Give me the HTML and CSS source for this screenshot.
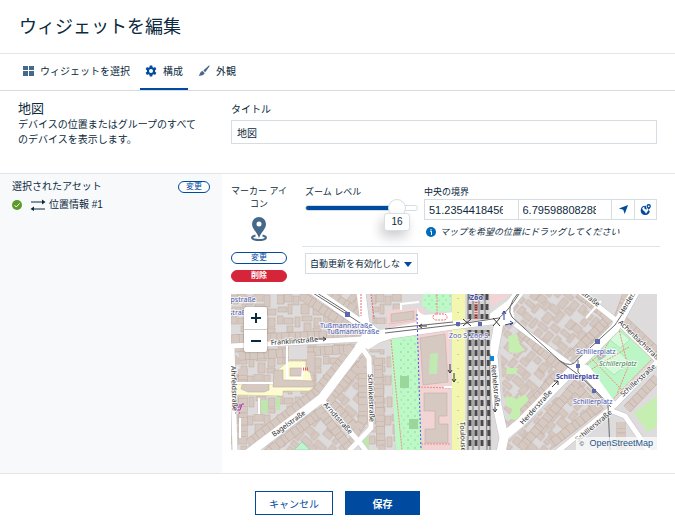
FILE: index.html
```html
<!DOCTYPE html>
<html lang="ja">
<head>
    <meta charset="UTF-8">
    <meta name="viewport" content="width=device-width, initial-scale=1.0">
    <title>ウィジェットを編集</title>
    <link rel="stylesheet" href="styles.css">
</head>
<body>
    <header class="header">
        <h1>ウィジェットを編集</h1>
    </header>

    <nav class="tabs">
        <a href="#select" class="tab">
            <svg class="tab-icon" viewBox="0 0 12 12"><path d="M1 1h5v4H1zM7 1h5v4H7zM1 6h5v5H1zM7 6h5v5H7z"/></svg>
            ウィジェットを選択
        </a>
        <a href="#config" class="tab active">
            <svg class="tab-icon" viewBox="0 0 24 24"><path fill-rule="evenodd" d="M9.500 1h5l.6 3.300 2 1.100 3.100-1.200 2.500 4.300-2.600 2.200v2.600l2.600 2.200-2.500 4.300-3.100-1.200-2 1.100-.6 3.300h-5l-.6-3.300-2-1.100-3.100 1.200-2.500-4.300 2.600-2.200v-2.600L1.300 8.500l2.500-4.300 3.100 1.200 2-1.100zM12 8a4 4 0 1 0 0 8 4 4 0 0 0 0-8z"/></svg>
            構成
        </a>
        <a href="#look" class="tab">
            <svg class="tab-icon" viewBox="0 0 12 12"><path d="M10.600.7c.6-.4 1.200.2.800.8L7.200 7.300 5.300 5.400zM4.600 6 6.600 8C6.300 10.200 3.500 11 .5 10.700 2.300 9.500 1.800 6.500 4.600 6z"/></svg>
            外観
        </a>
    </nav>

    <section class="intro">
        <div class="intro-text">
            <h2>地図</h2>
            <p>デバイスの位置またはグループのすべてのデバイスを表示します。</p>
        </div>
        <div class="intro-field">
            <label for="title">タイトル</label>
            <input type="text" id="title" class="input" value="地図">
        </div>
    </section>

    <main class="main">
        <aside class="assets">
            <div class="assets-head">
                <h3>選択されたアセット</h3>
                <button type="button" class="pill pill-small">変更</button>
            </div>
            <div class="asset">
                <svg class="check" viewBox="0 0 10 10"><circle cx="5" cy="5" r="5"/><path d="M2.500 5.200 4.300 7 7.600 3.400"/></svg>
                <svg class="arrows" viewBox="0 0 16 12"><path d="M1 3h13M2 10h13"/><path class="heads" d="M12 .5 15.500 3 12 5.500zM4 7.500.5 10 4 12z"/></svg>
                <span>位置情報 #1</span>
            </div>
        </aside>

        <div class="config">
            <div class="options">
                <div class="marker">
                    <p class="marker-label">マーカー アイコン</p>
                    <svg class="marker-icon" viewBox="0 0 16 26">
                        <path fill-rule="evenodd" d="M8 1a7 7 0 0 0-7 7c0 5 5 8 7 14 2-6 7-9 7-14a7 7 0 0 0-7-7zm0 4.500a2.500 2.500 0 1 1 0 5 2.500 2.500 0 0 1 0-5z"/>
                        <path class="ring" d="M4.500 19.500C-1.500 21 1 24 8 24s9.500-3 3.500-4.500"/>
                    </svg>
                    <button type="button" class="pill">変更</button>
                    <button type="button" class="pill pill-danger">削除</button>
                </div>

                <div class="settings">
                    <div class="settings-row">
                        <div class="zoom-level">
                            <label for="zoom">ズーム レベル</label>
                            <div class="slider">
                                <input type="range" id="zoom" min="1" max="18" value="16">
                                <output for="zoom" class="bubble">16</output>
                            </div>
                        </div>
                        <div class="bounds">
                            <label for="lat">中央の境界</label>
                            <div class="bounds-group">
                                <div class="coord"><input type="text" id="lat" value="51.23544184568"></div>
                                <div class="coord"><input type="text" aria-label="経度" value="6.79598808288"></div>
                                <button type="button" aria-label="現在地">
                                    <svg viewBox="0 0 12 12"><path d="M11 1 7.300 11 5.700 6.400 1 4.800z"/></svg>
                                </button>
                                <button type="button" aria-label="アセットの位置">
                                    <svg viewBox="0 0 12 12"><path fill-rule="evenodd" d="M6.200 2A5 5 0 1 0 10.700 8L9.300 6.500 8 8.500 6.500 10.500 5.600 8.800 3.700 7 2.300 5.200C3 3.700 4 3 5 3l-.5 1.500L6 5.800 7.500 6z"/><path fill-rule="evenodd" d="M9.500 0A2.400 2.400 0 0 0 7.100 2.400C7.100 4 9 5.200 9.500 6.500 10 5.200 11.900 4 11.900 2.400A2.400 2.400 0 0 0 9.500 0zm0 1.500a1 1 0 1 1 0 2 1 1 0 0 1 0-2z"/></svg>
                                </button>
                            </div>
                            <p class="hint">
                                <svg viewBox="0 0 10 10"><circle cx="5" cy="5" r="5"/><path d="M4 4.200h1.500V8M5 2v1.200"/></svg>
                                <em>マップを希望の位置にドラッグしてください</em>
                            </p>
                        </div>
                    </div>
                    <div class="refresh">
                        <select aria-label="自動更新">
                            <option>自動更新を有効化しな</option>
                        </select>
                    </div>
                </div>
            </div>

            <div class="map">
                <svg class="map-canvas" viewBox="0 0 426 156" preserveAspectRatio="xMidYMid slice">
                    <defs>
                        <pattern id="houses" width="46" height="40" patternUnits="userSpaceOnUse">
                            <path class="house" d="M0 1h7v9H0zM7 0h8v8H7zM16 2h6v9h-6zM23 0h9v7h-9zM33 1h6v12h-6zM1 13h9v5H1zM11 10h4v10h-4zM24 10h8v10h-8zM36 15h9v6h-9zM0 22h6v8H0zM7 24h9v6H7zM18 23h5v10h-5zM25 22h10v5H25zM37 24h7v9h-7zM10 32h6v6h-6zM27 29h7v10h-7zM36 34h8v5h-8z"/>
                        </pattern>
                        <pattern id="houses-up" width="46" height="40" patternUnits="userSpaceOnUse" patternTransform="rotate(-49)">
                            <rect width="46" height="40" fill="url(#houses)"/>
                        </pattern>
                        <pattern id="houses-down" width="46" height="40" patternUnits="userSpaceOnUse" patternTransform="rotate(40)">
                            <rect width="46" height="40" fill="url(#houses)"/>
                        </pattern>
                        <pattern id="trees" width="7" height="8" patternUnits="userSpaceOnUse">
                            <circle cx="2" cy="2" r=".7" fill="#7fbf8b"/><circle cx="5" cy="6" r=".6" fill="#7fbf8b"/>
                        </pattern>
                        <path id="terraces" d="M18 149 84 99 123 52M32 162l58-44 30 38M98 106l34-38v58l-6 10zM2 45l120-5M8 62l112-7M92-4l43 28M74 4l52 34M280 132l55-61M290 38l40 36M290 154l54-62 22 22-46 36M340 62l38-38-30-25M396 0l-8 22 38 36M396 115l30-31M390 128v30M147 65l3 88M12 75v70"/>
                        <path id="side-streets" d="M0 52 132 45M91 106 129 149 135 157M131 54 138 64 140 134 118 157M1 54 4 157M349-2 387 28 428 68M427 67 384 111 326 158M381 117 394 122 418 157M384 111 341 72 284 30"/>
                        <path id="main-streets" d="M14 162 91 104 130 52M79-6 116 20 144 40M130 50 160 40 222 31 268 25 290-4M268 28 262 61 266 111 273 144 270 158M272 143 289 129 341 76 354 64 384 34 405-4M130-2 134 30 146 40"/>
                    </defs>

                    <!-- ground and blocks -->
                    <rect width="426" height="156" fill="#dedbdc"/>
                    <path fill="url(#houses)" d="M0 0h81l55 38v8L0 51zM0 54l125-5-34 55-70 52H0zM141 0h30v30h-30zM138 55h22l5 101h-27z"/>
                    <path fill="url(#houses-up)" d="M92 104 130 60 138 70v60L118 152zM27 156 88 112 124 150v6zM268 30h20l50 45-64 72zM274 150 350 80l30 30-60 46h-44z"/>
                    <path fill="url(#houses-down)" d="M90 0h42v25zM284 0h70l30 30-46 40-56-48z"/>

                    <!-- terraces along the streets -->
                    <use href="#terraces" class="terrace-edge"/>
                    <use href="#terraces" class="terrace"/>

                    <!-- courtyards and large buildings -->
                    <path fill="#fdfbd0" stroke="#c9c5a0" stroke-width=".6" d="M4 90h41v-13l13-10h18l7 26-5 4H52v5L5 101z"/>
                    <path class="house" d="M43 76h9v10l32 1V58h-9v18l8 4v13H42zM59 74h12v8H59zM11 91c8-3 18-3 27-1v6l-5 2H17l-7-3z"/>
                    <path fill="#dedbdc" d="M58 50h18v15H58z"/>
                    <path fill="none" stroke="#fff" stroke-width="2" d="M56 47v37h15l1-12M0 89h42M9 124v20M28 104v16"/>
                    <path fill="#bfe6ae" d="M30 106h7v13h-7zM45 103h4v13h-4zM130 147l8-5v14h-9z"/>
                    <path fill="#bdf6ce" stroke="#85cf9b" stroke-width=".6" d="M65 154l6-6 8 8H64z"/>

                    <!-- park strip and school -->
                    <path fill="#bcf9c6" d="M159 44 186 40 191 156h-26zM192 0h28v17l-20 1-9-6z"/>
                    <path fill="url(#trees)" d="M168 46 186 42 191 156h-20zM192 0h28v14h-28z"/>
                    <path fill="#9bd79b" d="M169 82h9v12h-9zM178 125h9v10h-9z"/>
                    <path fill="#f3d4d5" d="M187 41l32-5v120h-28zM156 16l36-2v16l-36 3zM258 14 284-2h-25z"/>
                    <path class="house" d="M189 44l25-4 3 48-25 3zM193 99h23v23h-8v8h9v19h-23v-14h10v-18h-11zM158 19l27-3v10l-27 4z"/>
                    <path fill="#c1eab3" d="M199 60l8-1-1 21h-8z"/>
                    <path class="footway" d="M160 46l11 110M187 93l32 1M190 150h30M206 0v19"/>

                    <path fill="#c6eeb0" d="M277 42l9-2 4 16-12 3zM276 74h11l-2 6h-10zM275 102l10 2-1 12-9-4zM289 100v28l-12-4zM284 46l10 10-10 4zM284 106l10-6 4 6-14 14zM403 119l23-17v30l-9 6z"/>

                    <!-- Schillerplatz -->
                    <path fill="#bdf6c6" d="M387 31 422 64 381 106 349 76z"/>
                    <path fill="#d3fbd9" stroke="#94d8a5" stroke-width=".6" d="M388 36 399 46 389 54 379 46zM366 66 383 53 399 68 383 81z"/>
                    <path fill="#bfb9bd" d="M365 60l7-6 3 8-7 5z"/>
                    <path class="footway" d="M387 31 422 64 381 106M349 76l23-18 15-27M387 31l10 42-11 27M398 53l-42 25M360 64l31 32"/>

                    <!-- streets -->
                    <use href="#side-streets" class="street-edge"/>
                    <use href="#main-streets" class="street-edge wide"/>
                    <use href="#side-streets" class="street"/>
                    <use href="#main-streets" class="street wide"/>
                    <path fill="#fff" d="M124 52 134 36 150 36 186 28V14q2 6 8 7l40-4v15l-46 8-34 5-16 10z"/>
                    <path fill="#fff" d="M256 22 280 4l4 24-14 4zM346 68l12 4 26 36-5 6-36-36z"/>
                    <path fill="#f3d4d5" d="M156 17l29-3v12l-29 4z"/>
                    <path class="house" d="M160 20l23-3v8l-23 3z"/>
                    <path fill="none" stroke="#4d55e0" stroke-width="1" stroke-dasharray="2 2" d="M186 20l4 136"/>
                    <path fill="none" stroke="#fff" stroke-width="2" d="M170 16v-6l18-2M213 93h11M355 24l15-17"/>

                    <!-- avenue and railway -->
                    <path fill="#f3f6ae" d="M221 0h13v26l-13 1zM221 36l13-1v121h-13z"/>
                    <path fill="none" stroke="#8bb96d" stroke-width="1" stroke-dasharray="1 13" d="M227 4v152"/>
                    <path fill="#d9d6d8" d="M235 0h24v25l-24 3zM235 34l24-2 2 124h-26z"/>
                    <path class="rails" d="M237 0v25M242 0v25M248 0v25M254 0v25M237 36v120M242 36v120M248 36v120M254 36l2 120M259 60v96"/>
                    <path class="sleepers" d="M239 0v25M245 0v25M251 0v25M256 0v25M239 36v120M245 36v120M251 36v120M257 36l1 120"/>

                    <!-- tram lines -->
                    <path class="tram" d="M82-1 117 21 144 39M86-1 119 20M154 39 222 31 268 24Q278 16 288 0M154 35l68-7M288-2q-14 16-7 25l48 44q12 8 18-2l37-34L405-1M329 67l20 15 28 29 2 46M347 66v12l33 35"/>

                    <!-- stops, crossings and one-way arrows -->
                    <path class="stop-outline" d="M130 0v22M140 0l3 25"/>
                    <rect class="stop-outline" x="202" y="20" width="14" height="6" rx="3"/>
                    <path fill="none" stroke="#f05a5a" stroke-width="3" stroke-dasharray="1 1" d="M245 8v18M72 75h6"/>
                    <path fill="none" stroke="#39393b" stroke-width="1" d="M232 25l8 7M240 25l-8 7M262 24l7 8M269 24l-7 8"/>
                    <path fill="#5d67ad" d="M114 18h5v5h-5zM225 28h4v4h-4zM247 28h4v4h-4zM364 45h5v5h-5zM345 70h4v4h-4zM361 95h4v4h-4z"/>
                    <path fill="#0c86dd" d="M259 62h4v5h-4z"/>
                    <path class="arrow" d="M86 45h9m-3-2 3 2-3 2M196 32h-8m3-2-3 2 3 2M219 70v9m-2-3 2 3 2-3M223 79v9m-2-3 2 3 2-3M264 108v10m-2-3 2 3 2-3M321 93l6-6m-4 0h4v4"/>
                    <path class="arrow blue" d="M273 26V17m-2 3 2-3 2 3M274 31l8-2m-3-2 3 2-3 2"/>
                    <path fill="none" stroke="#ad39ad" stroke-width="1" d="M13 110h-2l-2 6H4l-2-5h8M3 113h7M4 119h1M8 119h1"/>

                    <g class="place">
                        <text x="-7" y="8">mpstraße</text>
                        <text x="-2" y="21">straß</text>
                        <text x="89" y="34">Tußmannstraße</text>
                        <text x="96" y="40">Tußmannstraße</text>
                        <text x="239" y="6" class="strong">Zoo</text>
                        <text x="218" y="44">Zoo S</text>
                        <text x="239" y="44">Zoo S</text>
                        <text x="345" y="60">Schillerplatz</text>
                        <text x="325" y="85" class="strong">Schillerplatz</text>
                        <text x="342" y="110">Schillerplatz</text>
                        <text x="368" y="72" class="park">Schillerplatz</text>
                    </g>
                    <g class="road">
                        <text transform="translate(40 51) rotate(-4)">Franklinstraße</text>
                        <text transform="translate(43 143) rotate(-36)">Bagelstraße</text>
                        <text transform="translate(92 111) rotate(48)">Arndtstraße</text>
                        <text transform="translate(137 80) rotate(88)">Schinkelstraße</text>
                        <text transform="translate(0 72) rotate(88)">Ahrfeldstraße</text>
                        <text transform="translate(229 128) rotate(88)">Toulouser</text>
                        <text transform="translate(260 71) rotate(84)">Rethelstraße</text>
                        <text transform="translate(292 131) rotate(-48)">Herderstraße</text>
                        <text transform="translate(392 21) rotate(-60)">Herderstr</text>
                        <text transform="translate(387 29) rotate(44)">Achenbachstraße</text>
                        <text transform="translate(350 0) rotate(38)">straße</text>
                        <text transform="translate(392 103) rotate(-42)">Schillerstraße</text>
                        <text transform="translate(347 148) rotate(-40)">Schillerstraße</text>
                    </g>
                </svg>
                <div class="map-zoom">
                    <button type="button" aria-label="拡大"><svg viewBox="0 0 10 10"><path d="M0 5h10M5 0v10"/></svg></button>
                    <button type="button" aria-label="縮小"><svg viewBox="0 0 10 10"><path d="M0 5h10"/></svg></button>
                </div>
                <div class="attribution"><small>©</small> <a href="#osm">OpenStreetMap</a></div>
            </div>
        </div>
    </main>

    <footer class="footer">
        <button type="button" class="btn">キャンセル</button>
        <button type="button" class="btn btn-primary">保存</button>
    </footer>
</body>
</html>
```

FILE: styles.css
```css
* {
    box-sizing: border-box;
}

body {
    margin: 0;
    background: #fff;
    color: #0b2a3d;
    font-family: "Liberation Sans", "Noto Sans CJK JP", sans-serif;
    font-size: 10px;
    line-height: 15px;
}

h1, h2, h3, p {
    margin: 0;
    font-weight: normal;
}

input, select, button {
    margin: 0;
    font-family: inherit;
    font-size: 10px;
    color: inherit;
}

button {
    padding: 0;
    cursor: pointer;
}

.header {
    padding: 14px 19px 13px;
    border-bottom: 1px solid #e3e6e9;
}

.header h1 {
    font-size: 18px;
    line-height: 26px;
}

/* Tabs */
.tabs {
    display: flex;
    gap: 5px;
    padding-left: 17px;
    border-bottom: 1px solid #d5dbe0;
}

.tab {
    display: flex;
    align-items: center;
    gap: 6px;
    height: 36px;
    padding: 0 5px;
    border-bottom: 2px solid transparent;
    color: inherit;
    text-decoration: none;
}

.tab.active {
    border-bottom-color: #004b9f;
}

.tab-icon {
    width: 12px;
    height: 12px;
    fill: #45698a;
}

.active .tab-icon {
    fill: #004b9f;
}

/* Widget title */
.intro {
    display: flex;
    gap: 28px;
    padding: 9px 18px 26px;
    border-bottom: 1px solid #e1e5e8;
}

.intro-text {
    flex: 0 0 185px;
}

.intro-text h2 {
    font-size: 13px;
    line-height: 17px;
}

.intro-field {
    flex: 1;
}

.intro-field label {
    display: block;
    height: 20px;
    line-height: 19px;
}

.input {
    display: block;
    width: 100%;
    height: 24px;
    padding: 0 5px;
    border: 1px solid #d5dde3;
}

/* Body */
.main {
    display: flex;
    border-bottom: 1px solid #e3e6e9;
}

.assets {
    flex: 0 0 222px;
    padding: 5px 12px;
    background: #f7f9fb;
}

.assets-head {
    display: flex;
    justify-content: space-between;
    align-items: center;
}

.assets-head h3 {
    font-size: 10px;
}

.asset {
    display: flex;
    align-items: center;
    gap: 3px;
    margin-top: 3px;
}

.check {
    width: 10px;
    height: 10px;
    margin-right: 5px;
    fill: #5b9b28;
}

.check path {
    fill: none;
    stroke: #fff;
}

.arrows {
    width: 16px;
    height: 12px;
    stroke: #0b2a3d;
}

.heads {
    fill: #0b2a3d;
    stroke: none;
}

.pill {
    display: block;
    width: 100%;
    height: 12px;
    border: 1px solid #004b9f;
    border-radius: 6px;
    background: #fff;
    color: #004b9f;
    font-size: 8px;
    line-height: 10px;
}

.pill-small {
    width: 32px;
}

.pill-danger {
    margin-top: 6px;
    border-color: #d4253a;
    background: #d4253a;
    color: #fff;
    font-weight: bold;
}

.config {
    flex: 1;
    min-width: 0;
    padding: 11px 18px 23px 9px;
}

.options {
    display: flex;
    gap: 15px;
    margin-right: -3px;
}

.marker {
    flex: 0 0 56px;
    text-align: center;
}

.marker-label {
    margin: 0 -2px;
    font-size: 9px;
    line-height: 13px;
}

.marker-icon {
    display: block;
    width: 16px;
    height: 26px;
    margin: 5px auto 10px;
    fill: #45698a;
}

.marker-icon .ring {
    fill: none;
    stroke: #45698a;
    stroke-width: 2;
}

.settings {
    flex: 1;
    min-width: 0;
    font-size: 9px;
    line-height: 14px;
}

.settings-row {
    display: flex;
    gap: 6px;
    padding: 0 3px 7px;
    border-bottom: 1px solid #e0e4e7;
}

.settings label {
    display: block;
}

.zoom-level {
    flex: 0 0 113px;
}

.slider {
    position: relative;
}

.slider input {
    display: block;
    width: 100%;
    height: 18px;
    appearance: none;
    background: none;
}

.slider input::-webkit-slider-runnable-track {
    height: 6px;
    border: 1px solid #d5dde3;
    border-radius: 3px;
    background: linear-gradient(to right, #004b9f 84%, #fff 84%) border-box;
}

.slider input::-webkit-slider-thumb {
    appearance: none;
    width: 18px;
    height: 18px;
    margin-top: -7px;
    border: 1px solid #d5dde3;
    border-radius: 50%;
    background: #fff;
}

.bubble {
    position: absolute;
    top: 14px;
    right: 8px;
    width: 26px;
    height: 18px;
    border: 1px solid #d9dfe4;
    border-radius: 3px;
    background: #fff;
    box-shadow: -3px 6px 12px rgba(0, 0, 0, 0.2);
    font-size: 10px;
    line-height: 16px;
    text-align: center;
}

.bounds {
    flex: 1;
    min-width: 0;
}

.bounds-group {
    display: flex;
    height: 21px;
    border: 1px solid #d5dde3;
}

.coord {
    flex: 1;
    min-width: 0;
    padding: 0 15px 0 4px;
    border-right: 1px solid #d5dde3;
}

.coord input {
    display: block;
    width: 100%;
    height: 19px;
    padding: 0;
    border: none;
    background: none;
    font-size: 11px;
}

.bounds-group button {
    display: flex;
    align-items: center;
    justify-content: center;
    width: 22px;
    border: none;
    background: #fff;
}

.bounds-group button + button {
    border-left: 1px solid #d5dde3;
}

.bounds-group svg {
    width: 11px;
    height: 11px;
    fill: #004b9f;
}

.hint {
    display: flex;
    align-items: center;
    gap: 4px;
    padding: 5px 2px 0;
}

.hint svg {
    width: 10px;
    height: 10px;
    fill: #006bb8;
}

.hint svg path {
    fill: none;
    stroke: #fff;
}

.refresh {
    position: relative;
    width: 113px;
    margin: 6px 3px 0;
}

.refresh::after {
    content: "";
    position: absolute;
    top: 9px;
    right: 6px;
    border: 4px solid transparent;
    border-top: 5px solid #004b9f;
    border-bottom: none;
    pointer-events: none;
}

.refresh select {
    display: block;
    width: 100%;
    height: 21px;
    padding: 0 4px;
    border: 1px solid #d5dde3;
    border-radius: 0;
    appearance: none;
    background: #fff;
    font-size: 9px;
}

/* Map */
.map {
    position: relative;
    margin-top: 12px;
}

.map-canvas {
    display: block;
    width: 100%;
    height: 156px;
    font-family: "Noto Sans", sans-serif;
}

.house {
    fill: #d5c9c2;
    stroke: #c2afa5;
    stroke-width: 0.6;
}

.terrace-edge {
    fill: none;
    stroke: #c2afa5;
    stroke-width: 9;
}

.terrace {
    fill: none;
    stroke: #d5c9c2;
    stroke-width: 8;
    stroke-dasharray: 6 0.6 4 0.6 7 0.6;
}

.street-edge,
.street {
    fill: none;
    stroke: #c6c1c3;
    stroke-width: 6;
    stroke-linejoin: round;
}

.street {
    stroke: #fff;
    stroke-width: 5;
}

.street-edge.wide {
    stroke-width: 10;
}

.street.wide {
    stroke-width: 9;
}

.footway {
    fill: none;
    stroke: #f28b85;
    stroke-width: 1;
    stroke-dasharray: 2 1;
}

.rails {
    fill: none;
    stroke: #777;
    stroke-width: 1;
}

.sleepers {
    fill: none;
    stroke: #4a4a4c;
    stroke-width: 3;
    stroke-dasharray: 6 4;
}

.tram {
    fill: none;
    stroke: #6a6a6c;
    stroke-width: 1;
}

.stop-outline {
    fill: none;
    stroke: #f26767;
    stroke-width: 1;
    stroke-dasharray: 2 1;
}

.arrow {
    fill: none;
    stroke: #39393b;
    stroke-width: 1;
}

.arrow.blue {
    stroke: #2a3fa0;
}

.place text,
.road text {
    paint-order: stroke;
    stroke: rgba(255, 255, 255, 0.7);
    stroke-width: 2px;
}

.place text {
    fill: #4e5cb4;
    font-size: 7px;
}

.place .strong {
    fill: #3d4aa8;
    font-weight: bold;
}

.place .park {
    fill: #3e7d50;
    font-style: italic;
}

.road text {
    fill: #28282a;
    font-size: 7px;
}

.map-zoom {
    position: absolute;
    top: 13px;
    left: 13px;
    width: 23px;
    border-radius: 2px;
    background: #fff;
    box-shadow: 0 0 2px rgba(0, 0, 0, 0.4);
}

.map-zoom button {
    display: flex;
    align-items: center;
    justify-content: center;
    width: 100%;
    height: 22px;
    border: none;
    background: none;
}

.map-zoom button + button {
    height: 23px;
    border-top: 1px solid #ccc;
}

.map-zoom svg {
    width: 10px;
    height: 10px;
    stroke: #0b2a3d;
    stroke-width: 2;
}

.attribution {
    position: absolute;
    right: 0;
    bottom: 0;
    padding: 0 4px;
    background: rgba(255, 255, 255, 0.7);
    font-size: 9px;
    line-height: 12px;
}

.attribution small {
    margin-right: 3px;
    font-size: 6px;
}

.attribution a {
    color: #1c558c;
    text-decoration: none;
}

/* Footer */
.footer {
    display: flex;
    justify-content: center;
    gap: 12px;
    padding: 17px 0;
}

.btn {
    width: 78px;
    height: 24px;
    border: 1px solid #004b9f;
    background: #fff;
    color: #004b9f;
}

.btn-primary {
    width: 75px;
    background: #004b9f;
    color: #fff;
    font-weight: bold;
}
```
